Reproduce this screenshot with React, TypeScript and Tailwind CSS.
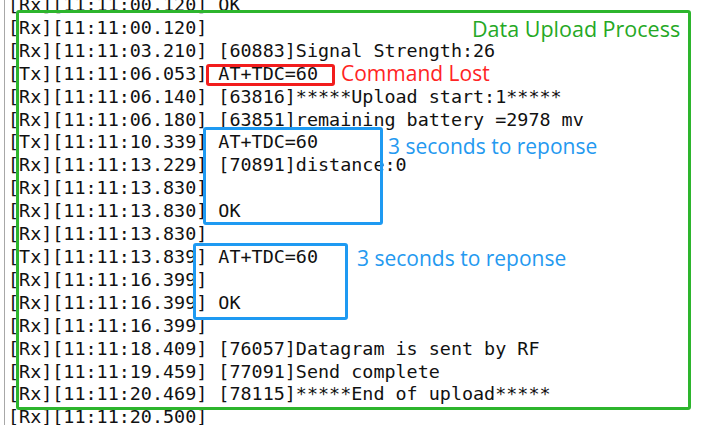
import React from 'react';

const logLines = [
  '[Rx][11:11:00.120] OK',
  '[Rx][11:11:00.120]',
  '[Rx][11:11:03.210] [60883]Signal Strength:26',
  '[Tx][11:11:06.053] AT+TDC=60',
  '[Rx][11:11:06.140] [63816]*****Upload start:1*****',
  '[Rx][11:11:06.180] [63851]remaining battery =2978 mv',
  '[Tx][11:11:10.339] AT+TDC=60',
  '[Rx][11:11:13.229] [70891]distance:0',
  '[Rx][11:11:13.830]',
  '[Rx][11:11:13.830] OK',
  '[Rx][11:11:13.830]',
  '[Tx][11:11:13.839] AT+TDC=60',
  '[Rx][11:11:16.399]',
  '[Rx][11:11:16.399] OK',
  '[Rx][11:11:16.399]',
  '[Rx][11:11:18.409] [76057]Datagram is sent by RF',
  '[Rx][11:11:19.459] [77091]Send complete',
  '[Rx][11:11:20.469] [78115]*****End of upload*****',
  '[Rx][11:11:20.500]',
];

const note = "absolute whitespace-nowrap leading-[24px] font-['Open_Sans',sans-serif]";

export default function App() {
  return (
    <div className="relative h-[425px] w-[702px] overflow-hidden bg-white">
      {/* serial log */}
      <div className="flex h-full pl-[4px]">
        <div className="flex flex-1 flex-col border-l border-[#a8a8a8] pl-[3px]">
          <div className="-mt-[6px] flex flex-col font-['DejaVu_Sans_Mono',monospace] text-[18.4px] leading-[22.9px] text-[#111]">
            {logLines.map((line, i) => (
              <div key={i} className="whitespace-pre">
                {line}
              </div>
            ))}
          </div>
        </div>
      </div>

      {/* annotations drawn over the log */}
      <div className="absolute left-[16px] top-[10px] h-[400px] w-[675px] rounded-[3px] border-[3px] border-[#2db52d]"></div>
      <div className={`${note} left-[472px] top-[17px] text-[21.5px] text-[#25a825]`}>Data Upload Process</div>

      <div className="absolute left-[206px] top-[64px] h-[22px] w-[129px] rounded-[3px] border-[3px] border-[#f21d1d]"></div>
      <div className={`${note} left-[341px] top-[61px] text-[21px] text-[#ff2424]`}>Command Lost</div>

      <div className="absolute left-[203px] top-[127px] h-[98px] w-[180px] rounded-[3px] border-[3px] border-[#1e9af2]"></div>
      <div className={`${note} left-[388px] top-[134px] text-[21px] text-[#2499f0]`}>3 seconds to reponse</div>

      <div className="absolute left-[193px] top-[243px] h-[77px] w-[155px] rounded-[3px] border-[3px] border-[#1e9af2]"></div>
      <div className={`${note} left-[357px] top-[246px] text-[21px] text-[#2499f0]`}>3 seconds to reponse</div>
    </div>
  );
}
